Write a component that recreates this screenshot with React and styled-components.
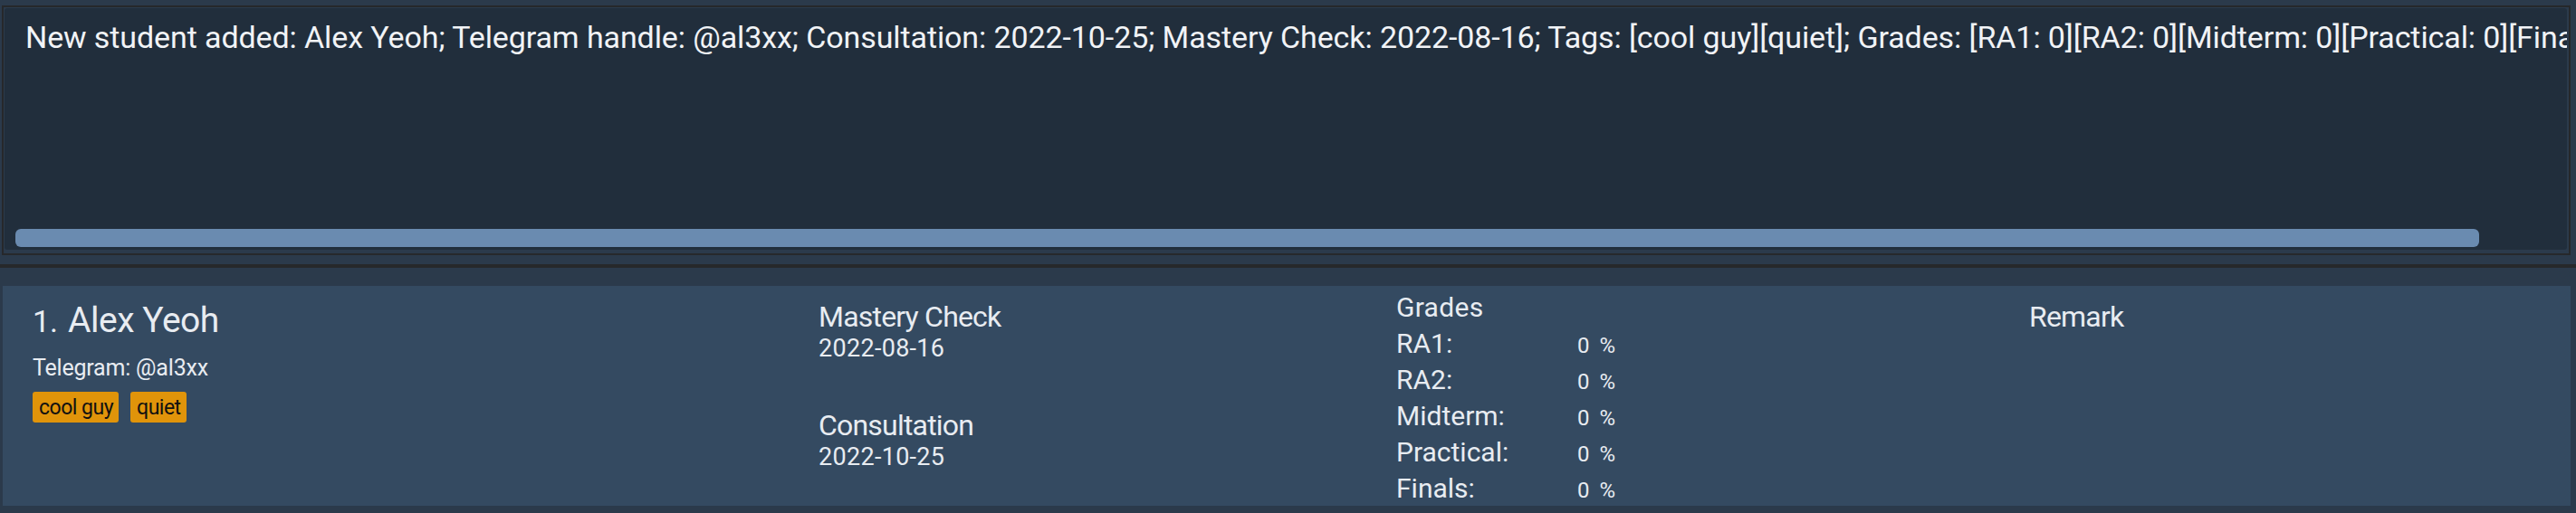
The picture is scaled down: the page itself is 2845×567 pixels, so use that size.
import React from "react";
import styled, { createGlobalStyle } from "styled-components";

const Global = createGlobalStyle`
  html, body { margin: 0; padding: 0; background: #2b3a4b; }
  body { font-family: Roboto, "Noto Sans", sans-serif; }
  * { box-sizing: border-box; }
`;

const Page = styled.div`
  width: 2845px;
  height: 567px;
  background: #2b3a4b;
  display: flex;
  flex-direction: column;
  overflow: hidden;
`;

const ResultBox = styled.div`
  margin: 6px 6px 0 2px;
  height: 276px;
  border: 2px solid #26282b;
  padding: 1px 2px 4px 1px;
  display: flex;
`;

const ResultInner = styled.div`
  flex: 1;
  min-width: 0;
  background: #212e3c;
  border-radius: 3px;
  display: flex;
  flex-direction: column;
  overflow: hidden;
`;

const ResultText = styled.div`
  flex: 1;
  padding: 12px 0 0 23px;
  font-size: 34px;
  line-height: 40px;
  letter-spacing: -0.1px;
  color: #f1f3f6;
  white-space: nowrap;
`;

const ScrollTrack = styled.div`
  height: 20px;
  margin: 0 8px 3px 12px;
  display: flex;
`;

const Thumb = styled.div`
  height: 100%;
  background: #6a8bb0;
  border-radius: 6px;
`;

const Divider = styled.div`
  margin-top: 10px;
  height: 4px;
  background: #26282b;
`;

const ListArea = styled.div`
  padding: 20px 6px 8px 3px;
`;

const Card = styled.div`
  height: 243px;
  background: #344a61;
  display: grid;
  grid-template-columns: 868px 638px 699px 1fr;
  padding-left: 33px;
  color: #e8ecf1;
`;

const Column = styled.div`
  display: flex;
  flex-direction: column;
  align-items: flex-start;
  padding-top: ${(p) => p.$top}px;
`;

const NameRow = styled.div`
  display: flex;
  align-items: baseline;
  height: 40px;
  line-height: 40px;
`;

const Index = styled.span`
  font-size: 34px;
  margin-right: 11px;
`;

const Name = styled.span`
  font-size: 39px;
  letter-spacing: -0.5px;
`;

const Telegram = styled.div`
  margin-top: 18px;
  font-size: 25px;
  line-height: 30px;
  letter-spacing: -0.2px;
`;

const Tags = styled.div`
  margin-top: 11px;
  display: flex;
  gap: 13px;
`;

const Tag = styled.span`
  height: 34px;
  padding: 1px 6px 0 7px;
  background: #e0940a;
  color: #111;
  border-radius: 3px;
  font-size: 23px;
  line-height: 33px;
  letter-spacing: -0.5px;
`;

const Heading = styled.div`
  font-size: 32px;
  line-height: 38px;
  letter-spacing: -0.8px;
  margin-top: ${(p) => p.$gap || 0}px;
`;

const DateText = styled.div`
  font-size: 27px;
  line-height: 30px;
  letter-spacing: 0.3px;
  margin-top: 1px;
`;

const GradesTitle = styled.div`
  font-size: 30px;
  line-height: 40px;
  letter-spacing: 0.3px;
`;

const GradeRow = styled.div`
  height: 40px;
  line-height: 40px;
  font-size: 30px;
  white-space: nowrap;
`;

const GradeLabel = styled.span`
  display: inline-block;
  width: 200px;
`;

const GradeValue = styled.span`
  font-size: 24px;
  line-height: 1;
  letter-spacing: 1px;
  word-spacing: 3px;
`;

const grades = ["RA1:", "RA2:", "Midterm:", "Practical:", "Finals:"];

export default function App() {
  return (
    <Page>
      <Global />
      <ResultBox>
        <ResultInner>
          <ResultText>
            New student added: Alex Yeoh; Telegram handle: @al3xx; Consultation: 2022-10-25; Mastery Check: 2022-08-16; Tags: [cool guy][quiet]; Grades: [RA1: 0][RA2: 0][Midterm: 0][Practical: 0][Finals: 0]
          </ResultText>
          <ScrollTrack>
            <Thumb style={{ width: "2721px" }} />
          </ScrollTrack>
        </ResultInner>
      </ResultBox>
      <Divider />
      <ListArea>
        <Card>
          <Column $top={18}>
            <NameRow>
              <Index>1.</Index>
              <Name>Alex Yeoh</Name>
            </NameRow>
            <Telegram>Telegram: @al3xx</Telegram>
            <Tags>
              <Tag>cool guy</Tag>
              <Tag>quiet</Tag>
            </Tags>
          </Column>
          <Column $top={15}>
            <Heading>Mastery Check</Heading>
            <DateText>2022-08-16</DateText>
            <Heading $gap={51}>Consultation</Heading>
            <DateText>2022-10-25</DateText>
          </Column>
          <Column $top={4}>
            <GradesTitle>Grades</GradesTitle>
            {grades.map((g) => (
              <GradeRow key={g}>
                <GradeLabel>{g}</GradeLabel>
                <GradeValue>0 %</GradeValue>
              </GradeRow>
            ))}
          </Column>
          <Column $top={15}>
            <Heading>Remark</Heading>
          </Column>
        </Card>
      </ListArea>
    </Page>
  );
}
